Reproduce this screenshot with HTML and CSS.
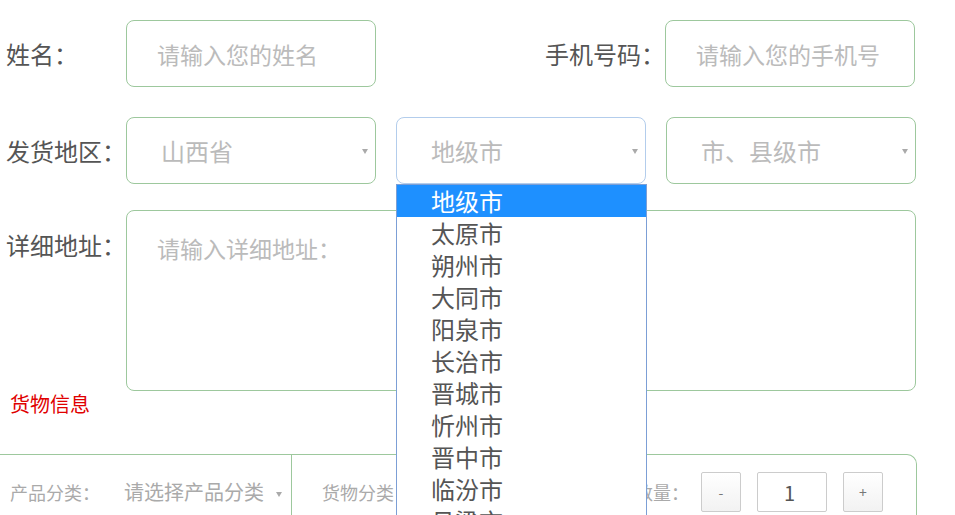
FILE: index.html
```html
<!DOCTYPE html>
<html lang="zh-CN">
<head>
  <meta charset="UTF-8">
  <meta name="viewport" content="width=device-width, initial-scale=1.0">
  <title>发货信息</title>
  <link rel="stylesheet" href="styles.css">
</head>
<body>

<form class="ship-form">
  <div class="form-row">
    <label class="form-label">姓名：</label>
    <input class="field" type="text" placeholder="请输入您的姓名">
    <label class="form-label label-right">手机号码：</label>
    <input class="field" type="text" placeholder="请输入您的手机号">
  </div>

  <div class="form-row">
    <label class="form-label">发货地区：</label>
    <div class="select-box">
      <span class="select-text">山西省</span>
      <span class="arrow"></span>
    </div>
    <div class="select-box is-open">
      <span class="select-text">地级市</span>
      <span class="arrow"></span>
      <ul class="dropdown">
        <li class="active">地级市</li>
        <li>太原市</li>
        <li>朔州市</li>
        <li>大同市</li>
        <li>阳泉市</li>
        <li>长治市</li>
        <li>晋城市</li>
        <li>忻州市</li>
        <li>晋中市</li>
        <li>临汾市</li>
        <li>吕梁市</li>
        <li>运城市</li>
      </ul>
    </div>
    <div class="select-box">
      <span class="select-text">市、县级市</span>
      <span class="arrow"></span>
    </div>
  </div>

  <div class="form-row row-top">
    <label class="form-label">详细地址：</label>
    <textarea class="address" placeholder="请输入详细地址："></textarea>
  </div>

  <p class="section-title">货物信息</p>

  <div class="goods">
    <div class="goods-cell cell-first">
      <span class="goods-label">产品分类：</span>
      <span class="goods-select">请选择产品分类<span class="arrow"></span></span>
    </div>
    <div class="goods-cell cell-second">
      <span class="goods-label">货物分类：</span>
      <span class="goods-select">请选择货物分类</span>
      <div class="qty">
        <span class="goods-label">数量：</span>
        <button type="button" class="qty-btn">-</button>
        <input class="qty-input" type="text" value="1">
        <button type="button" class="qty-btn">+</button>
      </div>
    </div>
  </div>
</form>

</body>
</html>
```

FILE: styles.css
```css
:root {
  --green-border: #9dc89d;
  --focus-border: #b3cdec;
  --text-color: #555;
  --placeholder: #bbb;
  --muted: #aaa;
}

* {
  box-sizing: border-box;
}

body {
  margin: 0;
  padding-top: 20px;
  font-family: "Noto Sans CJK SC", "Microsoft YaHei", sans-serif;
  color: var(--text-color);
  background-color: #fff;
  overflow: hidden;
}

.form-row {
  display: flex;
  align-items: center;
  padding-left: 6px;
  margin-bottom: 30px;
}

.row-top {
  align-items: flex-start;
  margin-bottom: 0;
  margin-top: -4px;
}

.form-label {
  width: 120px;
  font-size: 24px;
  line-height: 30px;
}

.row-top .form-label {
  padding-top: 20px;
}

.label-right {
  width: 289px;
  text-align: right;
  padding-right: 0;
}

.field,
.select-box,
.address {
  width: 250px;
  height: 67px;
  border: 1px solid var(--green-border);
  border-radius: 8px;
  background-color: #fff;
  font-family: inherit;
  font-size: 23px;
  color: var(--text-color);
  padding: 0 30px;
  outline: none;
}

.field::placeholder,
.address::placeholder {
  color: var(--placeholder);
}

.select-box {
  position: relative;
  display: flex;
  align-items: center;
  padding-left: 34px;
  margin-right: 20px;
}

.select-text {
  color: var(--placeholder);
  font-size: 24px;
}

.select-box .arrow {
  position: absolute;
  right: 7px;
  top: 31px;
}

.arrow {
  display: inline-block;
  width: 0;
  height: 0;
  border-left: 3px solid transparent;
  border-right: 3px solid transparent;
  border-top: 5px solid #aaa;
}

.is-open {
  border-color: var(--focus-border);
}

.dropdown {
  position: absolute;
  top: 66px;
  left: -1px;
  width: 251px;
  margin: 0;
  padding: 0;
  list-style: none;
  background-color: #fff;
  border: 1px solid #7c9fd6;
  z-index: 10;
}

.dropdown li {
  height: 32px;
  line-height: 32px;
  padding-left: 34px;
  font-size: 24px;
  color: var(--text-color);
}

.dropdown li.active {
  background-color: #1e90ff;
  color: #fff;
}

.address {
  width: 790px;
  height: 181px;
  padding: 21px 30px;
  resize: none;
  line-height: 32px;
}

.section-title {
  margin: 0;
  padding-left: 10px;
  color: #e00000;
  font-size: 20px;
  line-height: 26px;
}

.goods {
  display: flex;
  width: 917px;
  height: 120px;
  margin-top: 37px;
  border-top: 1px solid var(--green-border);
  border-right: 1px solid var(--green-border);
  border-top-right-radius: 10px;
}

.goods-cell {
  display: flex;
  align-items: flex-start;
  padding-top: 17px;
}

.cell-first {
  width: 292px;
  padding-left: 10px;
  border-right: 1px solid var(--green-border);
}

.cell-second {
  flex: 1;
  padding-left: 30px;
  padding-right: 33px;
}

.goods-label {
  width: 114px;
  font-size: 18px;
  line-height: 40px;
  color: var(--muted);
}

.goods-select {
  font-size: 20px;
  line-height: 40px;
  color: var(--muted);
}

.goods-select .arrow {
  margin-left: 12px;
  vertical-align: middle;
}

.qty {
  display: flex;
  align-items: center;
  margin-left: auto;
}

.qty .goods-label {
  width: 66px;
}

.qty-btn {
  width: 40px;
  height: 40px;
  border: 1px solid #ccc;
  border-radius: 2px;
  background: linear-gradient(#fff, #f2f2f2);
  font-size: 14px;
  color: #777;
  font-family: inherit;
  padding: 0;
}

.qty-input {
  width: 70px;
  height: 40px;
  margin: 0 16px;
  border: 1px solid #ccc;
  border-radius: 2px;
  font-family: inherit;
  font-size: 20px;
  color: var(--text-color);
  text-align: left;
  padding: 0 0 0 26px;
  outline: none;
}
```
